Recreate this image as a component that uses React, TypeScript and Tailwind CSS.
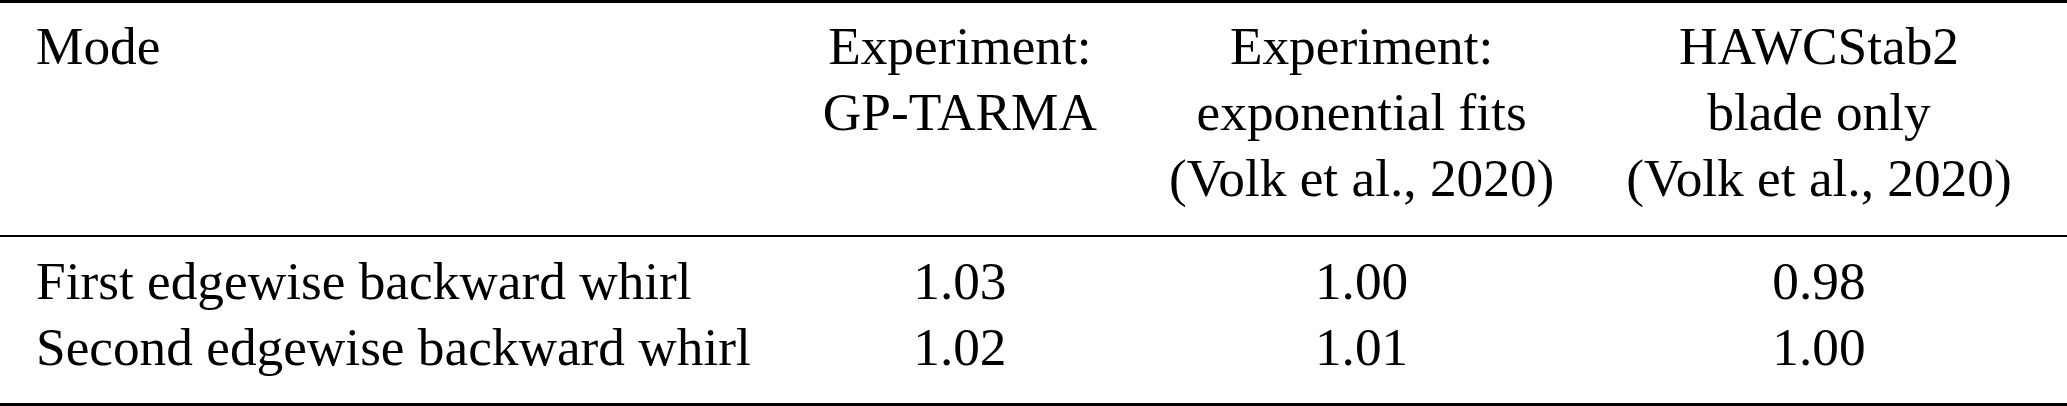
import React from "react";

const serif = { fontFamily: '"Liberation Serif", "Times New Roman", serif' };

const cell = "px-[36px] whitespace-nowrap";

export default function App() {
  return (
    <div className="w-[2067px] h-[406px] bg-white text-black overflow-hidden" style={serif}>
      <div className="w-max min-w-[2067px]">
        <div className="h-[3px] bg-black" />
        <div className="grid grid-cols-[auto_auto_auto_auto_1fr] text-[53.3px] leading-[66px]">
          {/* header */}
          <div className={`${cell} pt-[11px] pb-[23px]`}>Mode</div>
          <div className={`${cell} pt-[11px] pb-[23px] text-center`}>
            <div>Experiment:</div>
            <div>GP-TARMA</div>
          </div>
          <div className={`${cell} pt-[11px] pb-[23px] text-center`}>
            <div>Experiment:</div>
            <div>exponential fits</div>
            <div>(Volk et al., 2020)</div>
          </div>
          <div className={`${cell} pt-[11px] pb-[23px] text-center`}>
            <div>HAWCStab2</div>
            <div>blade only</div>
            <div>(Volk et al., 2020)</div>
          </div>
          <div />

          {/* midrule */}
          <div className="col-span-5 h-[2px] bg-black" />

          {/* body */}
          <div className={`${cell} pt-[12px] pb-[22px]`}>
            <div>First edgewise backward whirl</div>
            <div>Second edgewise backward whirl</div>
          </div>
          <div className={`${cell} pt-[12px] pb-[22px] text-center`}>
            <div>1.03</div>
            <div>1.02</div>
          </div>
          <div className={`${cell} pt-[12px] pb-[22px] text-center`}>
            <div>1.00</div>
            <div>1.01</div>
          </div>
          <div className={`${cell} pt-[12px] pb-[22px] text-center`}>
            <div>0.98</div>
            <div>1.00</div>
          </div>
          <div />
        </div>
        <div className="h-[3px] bg-black" />
      </div>
    </div>
  );
}
